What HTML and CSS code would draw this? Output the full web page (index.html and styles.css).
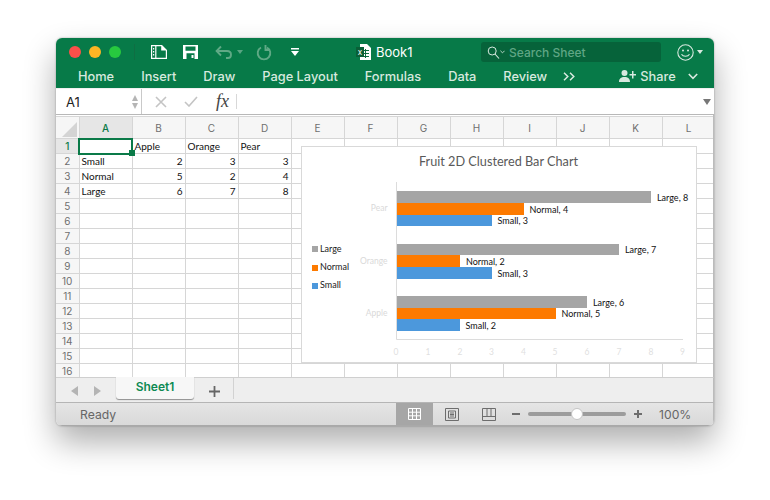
FILE: index.html
```html
<!DOCTYPE html>
<html lang="en">
<head>
<meta charset="utf-8">
<title>Book1</title>
<link rel="stylesheet" href="styles.css">
</head>
<body>
<div class="window">
  <header class="ribbon">
    <div class="titlebar">
      <span class="light red"></span><span class="light amber"></span><span class="light green"></span>
      <span class="tdiv"></span>
      <svg class="i-side" width="16" height="14" viewBox="0 0 16 14"><path fill="#fff" fill-rule="evenodd" d="M0 0h11l5 5v9H0zM1.2 1.2v11.6h3V1.2zM5.4 1.2v11.6h9.4V5.6h-4.6V1.2z"/><path fill="#fff" d="M2 3h1.2v1.4H2zM2 6h1.2v1.4H2zM2 9h1.2v1.4H2z"/></svg>
      <svg class="i-save" width="15" height="14" viewBox="0 0 15 14"><path fill="#fff" fill-rule="evenodd" d="M0 0h15v14H0zM2.5 1.4v4.4h10V1.4zM3.5 8.2V14h8V8.2z"/><path fill="#fff" d="M8.5 10h2v3h-2z"/></svg>
      <svg class="i-undo" width="18" height="14" viewBox="0 0 18 14"><path fill="none" stroke="#5fa985" stroke-width="1.9" d="M6 1.5 1.6 6 6 10.5M2 6h10c2.400 0 4 1.600 4 3.700S14.800 13 13 13h-2"/></svg>
      <span class="caret dim c-undo"></span>
      <svg class="i-redo" width="16" height="17" viewBox="0 0 16 17"><path fill="none" stroke="#5fa985" stroke-width="1.9" d="M5 3.500a6.300 6.300 0 1 0 6 0M9.500 1v5H14"/></svg>
      <svg class="i-qat" width="8" height="8" viewBox="0 0 8 8"><path fill="#fff" d="M0 0h8v1.400H0zM0 3h8L4 8z"/></svg>
      <svg class="i-doc" width="15" height="16" viewBox="0 0 15 16"><path fill="#fff" d="M4 0h7l4 4v12H4z"/><path fill="#0c6b3e" d="M6 6h7v1H6zM6 9h7v1H6zM6 12h7v1H6zM9 5h1v9H9z"/><path fill="#0a5f37" d="M0 3h8v10H0z"/></svg>
      <span class="doc-x">x</span>
      <span class="doc-name">Book1</span>
      <div class="search">
        <svg width="13" height="13" viewBox="0 0 13 13"><circle cx="5.200" cy="5" r="4" fill="none" stroke="#d7e9df" stroke-width="1"/><path stroke="#d7e9df" stroke-width="1.100" d="m8 8 4 4.500"/></svg>
        <svg class="s-chev" width="5" height="4" viewBox="0 0 6 4"><path fill="none" stroke="#d7e9df" d="m.5.500 2.500 2.500L5.500.500"/></svg>
        <span class="s-text">Search Sheet</span>
      </div>
      <svg class="i-smile" width="17" height="17" viewBox="0 0 17 17"><circle cx="8.500" cy="8.500" r="7.700" fill="none" stroke="#d7e9df" stroke-width="1.100"/><circle cx="6" cy="6.500" r="1" fill="#d7e9df"/><circle cx="11" cy="6.500" r="1" fill="#d7e9df"/><path fill="none" stroke="#d7e9df" stroke-width="1.100" d="M4.500 10.300c1.500 2.600 6.500 2.600 8 0"/></svg>
      <span class="caret c-smile"></span>
    </div>
    <nav class="tabs">
      <span>Home</span><span>Insert</span><span>Draw</span><span>Page Layout</span><span>Formulas</span><span>Data</span><span>Review</span>
      <svg class="i-more" width="12" height="9" viewBox="0 0 12 9"><path fill="none" stroke="#d7e9df" stroke-width="1.500" d="m1 .8 3.800 3.700L1 8.200M7 .8l3.800 3.700L7 8.200"/></svg>
      <svg class="i-share" width="17" height="12" viewBox="0 0 17 12"><circle cx="5.500" cy="3" r="3" fill="#d7e9df"/><path fill="#d7e9df" d="M0 12c0-3.500 2-5 5.500-5s5.500 1.500 5.500 5zM13 1h1.500v3H17v1.500h-2.500v3H13v-3h-2.500V4H13z"/></svg>
      <span class="share">Share</span>
      <svg class="i-down" width="10" height="7" viewBox="0 0 10 7"><path fill="none" stroke="#d7e9df" stroke-width="1.600" d="m.8 1 4.200 4.300L9.200 1"/></svg>
    </nav>
  </header>

  <div class="formula">
    <div class="namebox"><span>A1</span>
      <div class="stepper"><i class="up"></i><i class="dn"></i></div>
    </div>
    <svg class="i-x" width="12" height="12" viewBox="0 0 12 12"><path stroke="#c4c4c4" stroke-width="1.600" d="m1 1 10 10M11 1 1 11"/></svg>
    <svg class="i-ok" width="14" height="11" viewBox="0 0 14 11"><path fill="none" stroke="#c4c4c4" stroke-width="1.600" d="m1 6 4 4 8-9"/></svg>
    <span class="fx">fx</span>
    <span class="fdiv"></span>
    <span class="f-arrow"></span>
  </div>

  <div class="sheet">
    <table class="cells">
      <thead>
        <tr><th class="corner"><span></span></th><th class="on">A</th><th>B</th><th>C</th><th>D</th><th>E</th><th>F</th><th>G</th><th>H</th><th>I</th><th>J</th><th>K</th><th>L</th></tr>
      </thead>
      <tbody>
        <tr><th class="on">1</th><td class="sel"><span class="handle"></span></td><td>Apple</td><td>Orange</td><td>Pear</td><td></td><td></td><td></td><td></td><td></td><td></td><td></td><td></td></tr>
        <tr><th>2</th><td>Small</td><td class="n">2</td><td class="n">3</td><td class="n">3</td><td></td><td></td><td></td><td></td><td></td><td></td><td></td><td></td></tr>
        <tr><th>3</th><td>Normal</td><td class="n">5</td><td class="n">2</td><td class="n">4</td><td></td><td></td><td></td><td></td><td></td><td></td><td></td><td></td></tr>
        <tr><th>4</th><td>Large</td><td class="n">6</td><td class="n">7</td><td class="n">8</td><td></td><td></td><td></td><td></td><td></td><td></td><td></td><td></td></tr>
        <tr><th>5</th><td></td><td></td><td></td><td></td><td></td><td></td><td></td><td></td><td></td><td></td><td></td><td></td></tr>
        <tr><th>6</th><td></td><td></td><td></td><td></td><td></td><td></td><td></td><td></td><td></td><td></td><td></td><td></td></tr>
        <tr><th>7</th><td></td><td></td><td></td><td></td><td></td><td></td><td></td><td></td><td></td><td></td><td></td><td></td></tr>
        <tr><th>8</th><td></td><td></td><td></td><td></td><td></td><td></td><td></td><td></td><td></td><td></td><td></td><td></td></tr>
        <tr><th>9</th><td></td><td></td><td></td><td></td><td></td><td></td><td></td><td></td><td></td><td></td><td></td><td></td></tr>
        <tr><th>10</th><td></td><td></td><td></td><td></td><td></td><td></td><td></td><td></td><td></td><td></td><td></td><td></td></tr>
        <tr><th>11</th><td></td><td></td><td></td><td></td><td></td><td></td><td></td><td></td><td></td><td></td><td></td><td></td></tr>
        <tr><th>12</th><td></td><td></td><td></td><td></td><td></td><td></td><td></td><td></td><td></td><td></td><td></td><td></td></tr>
        <tr><th>13</th><td></td><td></td><td></td><td></td><td></td><td></td><td></td><td></td><td></td><td></td><td></td><td></td></tr>
        <tr><th>14</th><td></td><td></td><td></td><td></td><td></td><td></td><td></td><td></td><td></td><td></td><td></td><td></td></tr>
        <tr><th>15</th><td></td><td></td><td></td><td></td><td></td><td></td><td></td><td></td><td></td><td></td><td></td><td></td></tr>
        <tr><th>16</th><td></td><td></td><td></td><td></td><td></td><td></td><td></td><td></td><td></td><td></td><td></td><td></td></tr>
      </tbody>
    </table>

    <svg class="chart" width="396" height="217" viewBox="301 146 396 217">
      <rect x="301.500" y="146.500" width="395" height="216" fill="#fff" stroke="#d9d9d9"/>
      <text class="c-title" x="498.500" y="165.500" text-anchor="middle">Fruit 2D Clustered Bar Chart</text>
      <g class="bar-large">
        <rect x="397" y="191" width="254" height="12"/><rect x="397" y="244" width="222" height="11"/><rect x="397" y="296" width="190" height="12"/>
      </g>
      <g class="bar-normal">
        <rect x="397" y="203" width="127" height="12"/><rect x="397" y="255" width="63" height="12"/><rect x="397" y="308" width="159" height="11"/>
      </g>
      <g class="bar-small">
        <rect x="397" y="215" width="95" height="11"/><rect x="397" y="267" width="95" height="12"/><rect x="397" y="319" width="63" height="12"/>
      </g>
      <path class="axis" d="M396.500 182v157.500H683"/>
      <g class="lab">
        <text x="657" y="201">Large, 8</text><text x="529.500" y="213">Normal, 4</text><text x="497.500" y="224">Small, 3</text>
        <text x="625" y="253">Large, 7</text><text x="466" y="265">Normal, 2</text><text x="497.500" y="277">Small, 3</text>
        <text x="593" y="306">Large, 6</text><text x="561.500" y="317">Normal, 5</text><text x="465.500" y="329">Small, 2</text>
      </g>
      <g class="cat">
        <text x="387.500" y="211">Pear</text><text x="387.500" y="264">Orange</text><text x="387.500" y="316">Apple</text>
      </g>
      <g class="tick">
        <text x="396" y="355">0</text><text x="428" y="355">1</text><text x="460" y="355">2</text><text x="491.500" y="355">3</text><text x="523.500" y="355">4</text><text x="555" y="355">5</text><text x="587" y="355">6</text><text x="619" y="355">7</text><text x="651" y="355">8</text><text x="682.500" y="355">9</text>
      </g>
      <rect class="bar-large" x="312" y="246" width="6" height="6"/><rect class="bar-normal" x="312" y="265" width="6" height="6"/><rect class="bar-small" x="312" y="283" width="6" height="6"/>
      <g class="leg">
        <text x="320" y="252">Large</text><text x="320" y="270">Normal</text><text x="320" y="288">Small</text>
      </g>
    </svg>
  </div>

  <div class="sheetbar">
    <svg class="nav-l" width="7" height="10" viewBox="0 0 7 10"><path fill="#b4b4b4" d="M7 0v10L0 5z"/></svg>
    <svg class="nav-r" width="7" height="10" viewBox="0 0 7 10"><path fill="#b4b4b4" d="M0 0v10l7-5z"/></svg>
    <div class="sheet-tab">Sheet1</div>
    <svg class="add" width="11" height="11" viewBox="0 0 11 11"><path fill="#666" d="M4.600 0h1.800v4.600H11v1.800H6.400V11H4.600V6.400H0V4.600h4.600z"/></svg>
    <span class="sb-div"></span>
  </div>

  <footer class="status">
    <span class="ready">Ready</span>
    <div class="view on">
      <svg width="13" height="12" viewBox="0 0 13 12"><path fill="none" stroke="#fff" d="M.5.500h12v11H.5zM.5 4.200h12M.5 7.800h12M4.500.500v11M8.500.500v11"/></svg>
    </div>
    <div class="view">
      <svg width="14" height="13" viewBox="0 0 14 13"><path fill="none" stroke="#6d6d6d" d="M.5.500h13v12H.5zM3.500 3h7v7h-7zM5 5h4M5 6.500h4M5 8h4"/></svg>
    </div>
    <div class="view">
      <svg width="14" height="13" viewBox="0 0 14 13"><path fill="none" stroke="#6d6d6d" d="M.5.500h13v12H.5zM.5 8.500h13M5 .500v8M9 .500v8"/></svg>
    </div>
    <span class="zminus"></span>
    <div class="slider"><span class="thumb"></span></div>
    <span class="zplus"></span>
    <span class="zoom">100%</span>
  </footer>
</div>
</body>
</html>
```

FILE: styles.css
```css
* { box-sizing: border-box; }
html, body { margin: 0; padding: 0; background: #fff; }
body { width: 770px; height: 500px; overflow: hidden; font-family: Inter, "Liberation Sans", sans-serif; }

.window {
  width: 658px;
  height: 388px;
  margin: 38px 0 0 56px;
  border-radius: 6px;
  overflow: hidden;
  display: flex;
  flex-direction: column;
  box-shadow: 0 16px 32px rgba(0,0,0,.32), 0 0 2px rgba(0,0,0,.35);
}

/* ribbon */
.ribbon { height: 50px; flex: none; background: #077a48; color: #d7e9df; }
.titlebar { height: 28px; display: flex; align-items: center; }
.light { width: 12px; height: 12px; border-radius: 50%; margin-right: 8px; }
.light.red { background: #fc4f4a; margin-left: 13px; }
.light.amber { background: #fdb524; }
.light.green { background: #27c93f; }
.tdiv { width: 1px; height: 16px; background: #0f6e43; margin-left: 5px; }
.i-side { margin-left: 16px; }
.i-save { margin-left: 16px; }
.i-undo { margin-left: 17px; }
.caret { width: 0; height: 0; border: 3px solid transparent; border-top: 4px solid #d7e9df; border-bottom: 0; }
.caret.dim { border-top-color: #5aa583; }
.c-undo { margin-left: 4px; }
.i-redo { margin-left: 13px; }
.i-qat { margin-left: 19px; }
.i-doc { margin-left: 57px; }
.doc-x { width: 8px; margin-left: -15px; margin-right: 7px; color: #fff; font-size: 8px; line-height: 10px; text-align: center; }
.doc-name { margin-left: 5px; width: 36px; font-size: 13px; color: #fff; }
.search {
  width: 180px;
  height: 20px;
  margin-left: 69px;
  padding-left: 6px;
  background: #06633a;
  border-radius: 3px;
  display: flex;
  align-items: center;
}
.s-chev { margin-left: 0; }
.s-text { margin-left: 4px; font-size: 12px; font-weight: 500; color: #5fa684; white-space: nowrap; }
.i-smile { margin-left: 16px; }
.c-smile { margin-left: 3px; }

.tabs { height: 22px; padding: 0 0 2px 22px; display: flex; align-items: center; gap: 27px; font-size: 12.800px; font-weight: 500; white-space: nowrap; }
.i-more { margin-left: -11px; }
.i-share { margin-left: 17px; }
.share { margin-left: -23px; }
.i-down { margin-left: -15px; }

/* formula bar */
.formula { height: 27px; flex: none; display: flex; align-items: center; background: #fff; border-top: 1px solid #f0f0f0; border-bottom: 1px solid #b8b8b8; }
.namebox { width: 86px; height: 100%; padding-left: 10px; padding-right: 4px; display: flex; align-items: center; justify-content: space-between; border-right: 1px solid #c9c9c9; font-size: 13px; color: #222; }
.stepper { display: flex; flex-direction: column; gap: 2px; margin-right: -1px; }
.stepper i { display: block; width: 0; height: 0; border: 3.500px solid transparent; }
.stepper .up { border-top: 0; border-bottom: 6px solid #b5b5b5; }
.stepper .dn { border-bottom: 0; border-top: 6px solid #b5b5b5; }
.i-x { margin-left: 13px; }
.i-ok { margin-left: 17px; }
.fx { margin-left: 18px; width: 14px; font-family: "Liberation Serif", serif; font-style: italic; font-size: 18px; color: #444; }
.fdiv { width: 1px; height: 15px; margin-left: 6px; background: #d8d8d8; }
.f-arrow { margin-left: auto; margin-right: 3px; width: 0; height: 0; border: 4px solid transparent; border-top: 6px solid #777; border-bottom: 0; }

/* sheet */
.sheet { position: relative; height: 262px; flex: none; overflow: hidden; background: #fff; border-right: 1px solid #bbb; padding-top: 1px; }
.cells { border-collapse: collapse; table-layout: fixed; width: 659px; font-family: Lato, sans-serif; font-size: 10px; color: #111; }
.cells th, .cells td { height: 15px; padding: 0; border: 1px solid #d6d6d6; overflow: hidden; white-space: nowrap; }
.cells td { padding: 0 3px 0 2px; line-height: 13px; }
.cells td.n { text-align: right; padding-right: 2px; }
.cells tbody th { width: 23px; background: #f6f6f6; font-family: Inter, sans-serif; font-weight: 400; font-size: 10px; color: #6f6f6f; border-left: 0; }
.cells thead th { height: 22px; width: 53px; background: #f6f6f6; font-family: Inter, sans-serif; font-weight: 400; font-size: 10px; color: #6f6f6f; }
.cells thead th.corner { width: 23px; border-left: 0; position: relative; }
.cells th.on, .cells thead th.on, .cells tbody th.on { background: #e6e6e6; color: #0a7a48; font-weight: 500; }
.corner span { display: block; width: 0; height: 0; margin: 4px 0 0 6px; border-style: solid; border-width: 0 0 15px 15px; border-color: transparent transparent #d4d4d4 transparent; }
.cells td.sel { position: relative; overflow: visible; outline: 2px solid #0a7a48; outline-offset: -1px; }
.handle { position: absolute; right: -3px; bottom: -3px; width: 6px; height: 6px; background: #0a7a48; border: 0; }

.chart { position: absolute; left: 245px; top: 31px; display: block; font-family: Lato, sans-serif; }
.c-title { font-size: 12.700px; fill: #595959; }
.bar-large { fill: #a5a5a5; }
.bar-normal { fill: #fd7a00; }
.bar-small { fill: #4c98dc; }
.axis { fill: none; stroke: #dcdcdc; stroke-width: 1; }
.lab text { font-size: 9px; fill: #111; }
.leg text { font-size: 9px; fill: #222; }
.cat text { font-size: 8.500px; fill: #d9d9d9; text-anchor: end; }
.tick text { font-size: 8.500px; fill: #dfdfdf; text-anchor: middle; }

/* sheet tabs */
.sheetbar { height: 26px; flex: none; display: flex; align-items: flex-start; background: #eee; border-top: 1px solid #cfcfcf; border-bottom: 1px solid #b5b5b5; border-right: 1px solid #bbb; }
.nav-l { margin: 8px 0 0 15px; }
.nav-r { margin: 8px 0 0 16px; }
.sheet-tab { width: 78px; height: 22px; margin-left: 15px; margin-top: -1px; background: #f7f7f7; border-radius: 0 0 3px 3px; box-shadow: 0 1px 1px rgba(0,0,0,.4); color: #0e8a53; font-size: 12px; font-weight: 600; line-height: 20px; text-align: center; }
.add { margin: 8px 0 0 15px; }
.sb-div { width: 1px; height: 21px; margin-left: 13px; background: #d2d2d2; }

/* status bar */
.status { height: 23px; flex: none; display: flex; align-items: center; background: linear-gradient(#e5e5e5, #d9d9d9); border-bottom: 1px solid #a9a9a9; border-right: 1px solid #bbb; font-size: 12.200px; color: #666; }
.ready { margin-left: 24px; width: 316px; }
.view { width: 37px; height: 22px; display: flex; align-items: center; justify-content: center; }
.view.on { background: #a6a6a6; }
.zminus { width: 8px; height: 2px; margin-left: 5px; background: #6d6d6d; }
.slider { position: relative; width: 98px; height: 4px; margin-left: 8px; border-radius: 2px; background: #9c9c9c; }
.thumb { position: absolute; left: 43px; top: -4px; width: 12px; height: 12px; border-radius: 50%; background: #fff; border: 1px solid #c4c4c4; }
.zplus { position: relative; width: 8px; height: 2px; margin-left: 8px; background: #6d6d6d; }
.zplus::after { content: ""; position: absolute; left: 3px; top: -3px; width: 2px; height: 8px; background: #6d6d6d; }
.zoom { margin-left: 17px; }
```
